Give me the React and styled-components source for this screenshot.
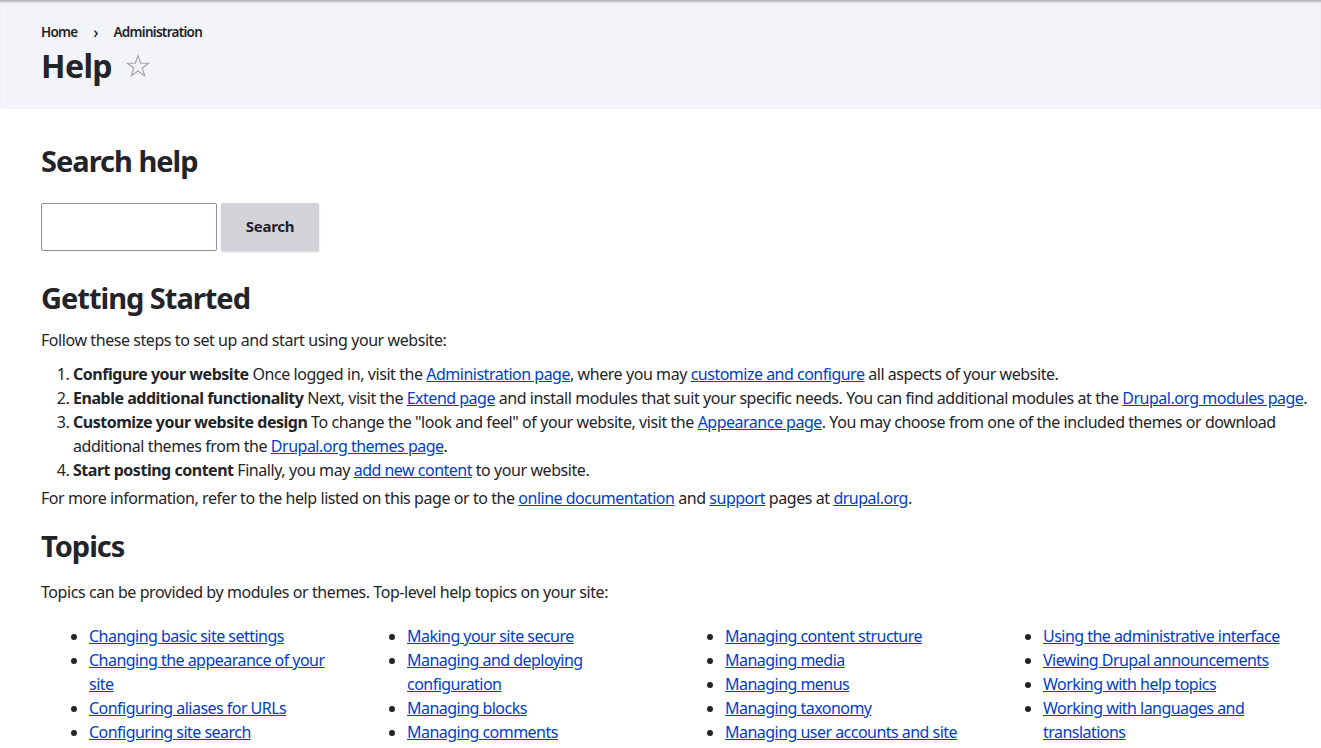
import React from "react";
import styled, { createGlobalStyle } from "styled-components";

const Global = createGlobalStyle`
  html, body { margin: 0; padding: 0; height: 100%; overflow: hidden; background: #fff; }
  body { font-family: "Noto Sans", "Open Sans", sans-serif; font-size: 16px; line-height: 24px; color: #232429; }
  #root { height: 100%; overflow: hidden; }
`;

const Header = styled.header`
  height: 109px;
  box-sizing: border-box;
  background: #f3f4f9;
  box-shadow: inset 0 3px 2px -1px #b5b6ba;
  padding: 20px 41px 0;
`;
const Crumbs = styled.nav`
  display: flex;
  align-items: center;
  height: 24px;
  font-size: 13.5px;
  font-weight: 600;
  letter-spacing: -0.72px;
`;
const Sep = styled.span`
  width: 36px;
  text-align: center;
  font-size: 16px;
  font-weight: 500;
`;
const TitleRow = styled.div`
  display: flex;
  align-items: center;
  gap: 14px;
  margin-top: 1px;
`;
const Title = styled.h1`
  margin: 0;
  font-size: 32px;
  line-height: 41px;
  font-weight: 700;
  letter-spacing: -0.6px;
`;
const Main = styled.main`
  padding: 31px 0 0 41px;
  letter-spacing: -0.43px;
`;
const H2 = styled.h2`
  margin: 0;
  font-size: 29px;
  line-height: 41px;
  font-weight: 700;
  letter-spacing: -1px;
`;
const SearchForm = styled.form`
  display: flex;
  gap: 4px;
  margin: 22px 0 26px;
`;
const Input = styled.input`
  width: 176px;
  height: 48px;
  box-sizing: border-box;
  border: 1px solid #8e929c;
  border-radius: 2px;
  background: #fff;
`;
const Button = styled.button`
  width: 98px;
  height: 48px;
  padding: 0 0 2px;
  border: 0;
  border-radius: 2px;
  background: #d3d4d9;
  box-shadow: 0 1px 2px rgba(0,0,0,.18);
  color: #232429;
  font: 700 15px/24px "Noto Sans", sans-serif;
  letter-spacing: -0.28px;
`;
const P = styled.p`
  margin: ${(p) => p.$margin || "0"};
`;
const Ol = styled.ol`
  margin: 10px 0 4px;
  padding: 0 0 0 32px;
  width: 1240px;
`;
const Strong = styled.b`
  letter-spacing: -0.48px;
`;
const A = styled.a`
  color: #003ecc;
  letter-spacing: -0.5px;
  text-decoration: underline;
`;
const Columns = styled.div`
  display: grid;
  grid-template-columns: repeat(4, 318px);
  margin-top: 20px;
`;
const Ul = styled.ul`
  margin: 0;
  padding: 0 0 0 48px;
  width: 240px;
`;
const TopicLink = styled(A)`
  letter-spacing: -0.53px;
`;
const TopicsHeading = styled(H2)`
  margin-top: 15px;
`;

const Star = () => (
  <svg width="24" height="24" viewBox="0 0 26 26" fill="none" stroke="#a5a6ab" strokeWidth="1.3" strokeLinejoin="miter">
    <path d="M13 2l2.9 8h8.6l-6.9 5.2 2.6 8.3L13 18.4l-7.2 5.1 2.6-8.3L1.5 10h8.6z" />
  </svg>
);

const columns = [
  ["Changing basic site settings", "Changing the appearance of your site", "Configuring aliases for URLs", "Configuring site search", "Creating a site"],
  ["Making your site secure", "Managing and deploying configuration", "Managing blocks", "Managing comments", "Managing content"],
  ["Managing content structure", "Managing media", "Managing menus", "Managing taxonomy", "Managing user accounts and site visitors"],
  ["Using the administrative interface", "Viewing Drupal announcements", "Working with help topics", "Working with languages and translations", "Writing"],
];

export default function App() {
  return (
    <>
      <Global />
      <Header>
        <Crumbs>
          <span>Home</span>
          <Sep>›</Sep>
          <span>Administration</span>
        </Crumbs>
        <TitleRow>
          <Title>Help</Title>
          <Star />
        </TitleRow>
      </Header>
      <Main>
        <H2>Search help</H2>
        <SearchForm onSubmit={(e) => e.preventDefault()}>
          <Input aria-label="Search" />
          <Button>Search</Button>
        </SearchForm>
        <H2>Getting Started</H2>
        <P $margin="10px 0 0">Follow these steps to set up and start using your website:</P>
        <Ol>
          <li><Strong>Configure your website</Strong> Once logged in, visit the <A href="#">Administration page</A>, where you may <A href="#">customize and configure</A> all aspects of your website.</li>
          <li><Strong>Enable additional functionality</Strong> Next, visit the <A href="#">Extend page</A> and install modules that suit your specific needs. You can find additional modules at the <A href="#">Drupal.org modules page</A>.</li>
          <li><Strong>Customize your website design</Strong> To change the "look and feel" of your website, visit the <A href="#">Appearance page</A>. You may choose from one of the included themes or download additional themes from the <A href="#">Drupal.org themes page</A>.</li>
          <li><Strong>Start posting content</Strong> Finally, you may <A href="#">add new content</A> to your website.</li>
        </Ol>
        <P>For more information, refer to the help listed on this page or to the <A href="#">online documentation</A> and <A href="#">support</A> pages at <A href="#">drupal.org</A>.</P>
        <TopicsHeading>Topics</TopicsHeading>
        <P $margin="14px 0 0">Topics can be provided by modules or themes. Top-level help topics on your site:</P>
        <Columns>
          {columns.map((items, i) => (
            <Ul key={i}>
              {items.map((t) => <li key={t}><TopicLink href="#">{t}</TopicLink></li>)}
            </Ul>
          ))}
        </Columns>
      </Main>
    </>
  );
}
